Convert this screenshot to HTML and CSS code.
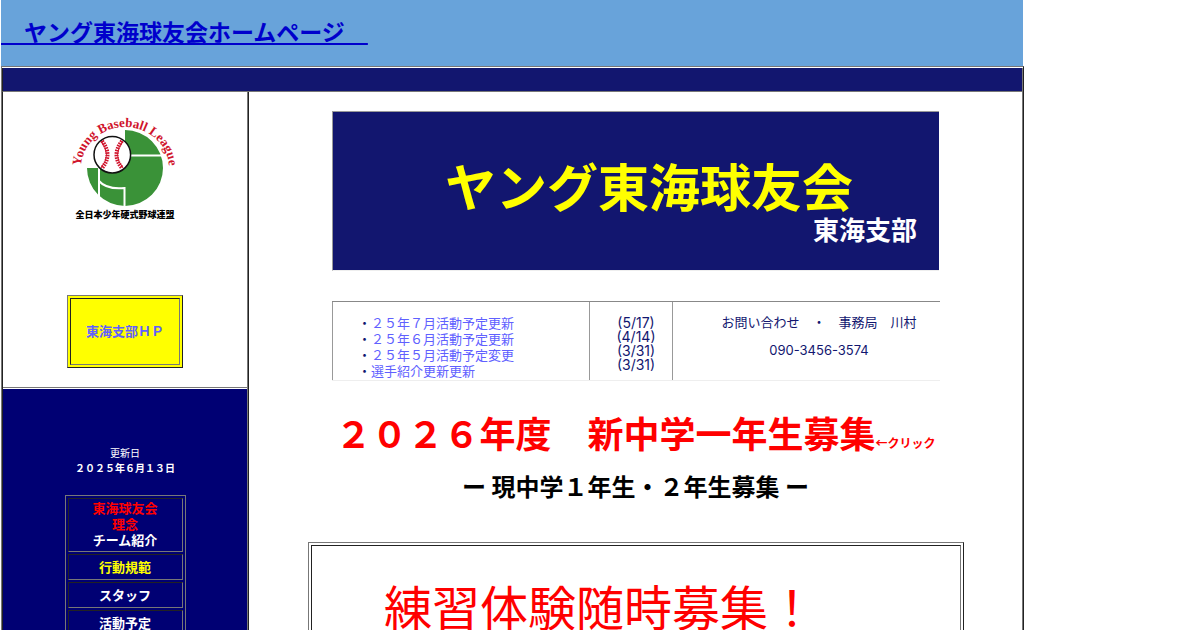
FILE: index.html
```html
<!DOCTYPE html>
<html lang="ja">
<head>
  <meta charset="UTF-8">
  <meta name="viewport" content="width=device-width, initial-scale=1.0">
  <title>ヤング東海球友会ホームページ</title>
  <link rel="stylesheet" href="styles.css">
</head>
<body>
  <div class="page">
    <header class="site-header">
      <a href="#">　ヤング東海球友会ホームページ　</a>
    </header>

    <div class="layout">
      <div class="bar"></div>

      <!-- Sidebar -->
      <aside class="sidebar">
        <div class="sidebar-top">
          <svg class="logo" viewBox="0 0 130 125" role="img" aria-label="Young Baseball League">
            <defs>
              <path id="arc" d="M21 63 A44 41 0 0 1 109 63"/>
            </defs>
            <path d="M65 25 A38 38 0 1 1 27 63 H65 Z" fill="#3a9238"/>
            <path d="M65 50.5 H103 M39 60 V98 M39 76 C45 83 54 84 64.500 83 V102" fill="none" stroke="#fff" stroke-width="2"/>
            <circle cx="52.300" cy="49.700" r="18.300" fill="#fff" stroke="#111" stroke-width="1.500"/>
            <path d="M41 36 Q52 50 41 63 M63 36 Q52 50 63 63" fill="none" stroke="#d0142c" stroke-width="1"/>
            <path d="M42 36 Q53 50 42 63 M62 36 Q51 50 62 63" fill="none" stroke="#d0142c" stroke-width="4" stroke-dasharray="1.500 1"/>
            <text class="logo-arc"><textPath href="#arc" startOffset="50%">Young Baseball League</textPath></text>
            <text class="logo-name" x="65" y="113">全日本少年硬式野球連盟</text>
          </svg>
          <div class="branch"><a href="#">東海支部ＨＰ</a></div>
        </div>
        <div class="sidebar-menu">
          <p class="updated">更新日<br><b>２０２５年６月１３日</b></p>
          <ul class="menu">
            <li class="menu-first"><a class="red" href="#">東海球友会<br>理念</a><br><a href="#">チーム紹介</a></li>
            <li><a class="yellow" href="#">行動規範</a></li>
            <li><a href="#">スタッフ</a></li>
            <li><a href="#">活動予定</a></li>
          </ul>
        </div>
      </aside>

      <!-- Main -->
      <main class="main">
        <div class="banner">
          <h1>ヤング東海球友会</h1>
          <p>東海支部</p>
        </div>

        <div class="info">
          <ul class="news">
            <li>・<a href="#">２５年７月活動予定更新</a></li>
            <li>・<a href="#">２５年６月活動予定更新</a></li>
            <li>・<a href="#">２５年５月活動予定変更</a></li>
            <li>・<a href="#">選手紹介更新更新</a></li>
          </ul>
          <div class="dates">(5/17)<br>(4/14)<br>(3/31)<br>(3/31)</div>
          <div class="contact">
            <p>お問い合わせ　・　事務局　川村</p>
            <p class="tel">090-3456-3574</p>
          </div>
        </div>

        <h2 class="recruit"><a href="#">２０２６年度　新中学一年生募集<small>←クリック</small></a></h2>
        <h3 class="recruit-sub">ー 現中学１年生・２年生募集 ー</h3>

        <div class="trial">
          <div class="trial-inner">練習体験随時募集！</div>
        </div>
      </main>
    </div>
  </div>
</body>
</html>
```
FILE: styles.css
```css
:root {
  --light: #777;
  --dark: #222;
  --navy: #12166f;
  --menu-bg: #000073;
  --link: #6060ff;
}

* {
  box-sizing: border-box;
}

body {
  margin: 0;
  background: #fff;
  font-family: "Noto Sans CJK JP", sans-serif;
  font-size: 13px;
  line-height: 16px;
}

h1, h2, h3, p, ul {
  margin: 0;
  padding: 0;
}

ul {
  list-style: none;
}

a {
  color: inherit;
  text-decoration: none;
}

.page {
  display: flex;
  flex-direction: column;
  max-width: 1024px;
  min-height: 100vh;
  padding-left: 1px;
}

.site-header {
  padding: 15px 0 19px;
  background: #68a3da;
  margin-right: 1px;
}

.site-header a {
  color: #0000cc;
  font-size: 23px;
  font-weight: bold;
  line-height: 32px;
  text-decoration: underline;
  text-decoration-thickness: 2px;
  text-underline-offset: 2px;
}

.layout {
  flex: 1;
  display: grid;
  grid-template-columns: 246px 1fr;
  grid-template-rows: 25px 1fr;
  border: 1px solid var(--light);
  border-right-color: var(--dark);
  border-bottom: none;
}

.bar {
  grid-column: 1 / -1;
  margin-top: 1px;
  background: var(--navy);
  border-left: 1px solid var(--dark);
  border-right: 1px solid var(--light);
  border-bottom: 1px solid var(--light);
}

/* Sidebar */
.sidebar {
  display: flex;
  flex-direction: column;
  border-left: 1px solid var(--dark);
  border-right: 1px solid var(--light);
}

.sidebar-top {
  display: flex;
  flex-direction: column;
  align-items: center;
  gap: 65px;
  padding: 13px 0 19px;
  border-bottom: 1px solid var(--light);
}

.logo {
  width: 130px;
  height: 125px;
}

.logo-arc {
  fill: #d0142c;
  font-family: "Liberation Serif", serif;
  font-size: 13px;
  font-weight: bold;
  text-anchor: middle;
}

.logo-name {
  font-size: 9px;
  font-weight: 900;
  text-anchor: middle;
}

.branch {
  width: 116px;
  padding: 2px;
  background: #ff0;
  border: 1px solid;
  border-color: var(--light) var(--dark) var(--dark) var(--light);
}

.branch a {
  display: block;
  padding: 24px 0 25px;
  border: 1px solid;
  border-color: var(--dark) var(--light) var(--light) var(--dark);
  color: var(--link);
  font-weight: bold;
  text-align: center;
}

.sidebar-menu {
  flex: 1;
  display: flex;
  flex-direction: column;
  align-items: center;
  gap: 20px;
  margin-top: 1px;
  padding-top: 56px;
  background: var(--menu-bg);
  color: #fff;
}

.updated {
  font-size: 10px;
  line-height: 15px;
  text-align: center;
}

.menu {
  display: grid;
  gap: 2px;
  width: 121px;
  padding: 2px;
  border: 1px solid var(--light);
  font-weight: bold;
  text-align: center;
}

.menu li {
  padding: 4px;
  border: 1px solid;
  border-color: var(--dark) var(--light) var(--light) var(--dark);
}

.menu .menu-first {
  padding: 1px 2px 3px;
}

.red {
  color: #f00;
}

.yellow {
  color: #ff0;
}

/* Main */
.main {
  padding: 19px 58px 0;
  border-left: 1px solid var(--dark);
  border-right: 1px solid var(--light);
}

.banner {
  margin: 0 25px 0 25px;
  padding: 43px 22px 27px;
  background: var(--navy);
  border: 1px solid #999;
  border-right: none;
  border-bottom-color: #eee;
}

.banner h1 {
  padding-left: 26px;
  color: #ff0;
  font-size: 51px;
  line-height: 60px;
  text-align: center;
}

.banner p {
  color: #fff;
  font-size: 26px;
  font-weight: bold;
  line-height: 28px;
  text-align: right;
}

.info {
  display: grid;
  grid-template-columns: 257px 83px 1fr;
  margin: 30px 24px 0 25px;
  border-top: 1px solid #888;
  border-bottom: 1px solid #eee;
  color: var(--navy);
}

.info > * {
  border-left: 1px solid #999;
}

.news {
  padding: 13px 0 1px 25px;
}

.news a {
  color: var(--link);
}

.dates {
  padding: 14px 0 8px 10px;
  font-family: Inter, "Noto Sans CJK JP", sans-serif;
  font-size: 14px;
  line-height: 14px;
  text-align: center;
}

.contact {
  display: grid;
  align-content: start;
  gap: 12px;
  padding: 12px 0 0 25px;
  text-align: center;
}

.contact .tel {
  font-family: Inter, "Noto Sans CJK JP", sans-serif;
}

.recruit {
  margin-top: 26px;
  color: #f00;
  font-size: 36px;
  line-height: 50px;
  text-align: center;
}

.recruit small {
  font-size: 12px;
}

.recruit-sub {
  margin-top: 2px;
  font-size: 24px;
  line-height: 32px;
  text-align: center;
}

.trial {
  padding: 2px;
  margin: 40px 0 0 1px;
  border: 1px solid;
  border-color: var(--light) var(--dark) var(--dark) var(--light);
}

.trial-inner {
  padding: 24px 0 40px 72px;
  border: 1px solid;
  border-color: var(--dark) var(--light) var(--light) var(--dark);
  color: #f00;
  font-size: 48px;
  line-height: 70px;
}
```
